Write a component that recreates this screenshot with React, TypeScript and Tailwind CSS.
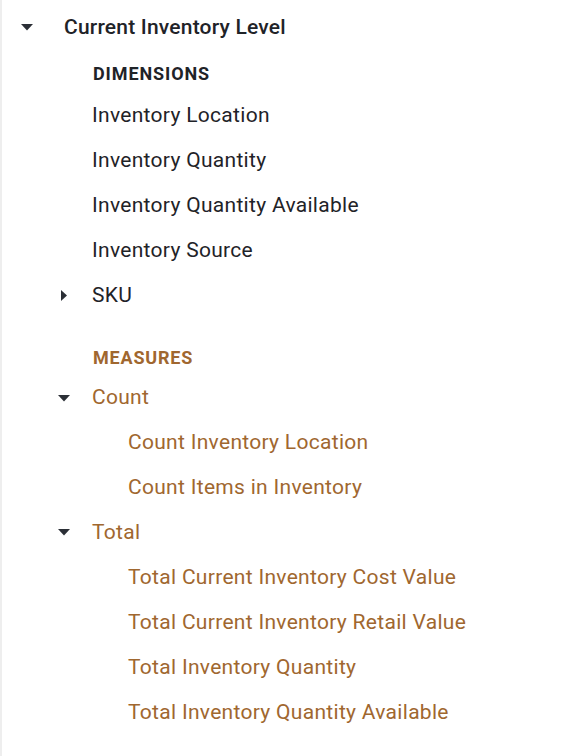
import React from "react";

const dark = "text-[#1f2328]";
const brown = "text-[#a0672f]";

function CaretDown() {
  return (
    <svg width="12" height="7" viewBox="0 0 12 7" className="shrink-0">
      <path d="M0 0 L12 0 L6 6.5 Z" fill="#2b2f36" />
    </svg>
  );
}

function CaretRight() {
  return (
    <svg width="6" height="11" viewBox="0 0 6 11" className="shrink-0">
      <path d="M0 0 L6 5.5 L0 11 Z" fill="#2b2f36" />
    </svg>
  );
}

function Row({
  indent,
  caret,
  children,
  className,
}: {
  indent: string;
  caret?: React.ReactNode;
  children: React.ReactNode;
  className?: string;
}) {
  return (
    <div className={`flex items-center h-[45px] ${indent}`}>
      {caret && <div className="w-[34px] flex items-center">{caret}</div>}
      <span className={className}>{children}</span>
    </div>
  );
}

export default function App() {
  const dims = [
    "Inventory Location",
    "Inventory Quantity",
    "Inventory Quantity Available",
    "Inventory Source",
  ];
  const counts = ["Count Inventory Location", "Count Items in Inventory"];
  const totals = [
    "Total Current Inventory Cost Value",
    "Total Current Inventory Retail Value",
    "Total Inventory Quantity",
    "Total Inventory Quantity Available",
  ];
  const item = "text-[21px] tracking-[0.3px]";

  return (
    <div
      className="w-[574px] h-[756px] bg-white border-l-2 border-[#eeeeee] pt-[5px]"
      style={{ fontFamily: "Roboto, 'Noto Sans', sans-serif" }}
    >
      {/* Header */}
      <div className="flex items-center h-[45px] pl-[19px]">
        <div className="w-[43px] flex items-center">
          <CaretDown />
        </div>
        <span className={`text-[21px] tracking-[0.2px] font-medium ${dark}`}>
          Current Inventory Level
        </span>
      </div>

      {/* Dimensions */}
      <div className="flex items-center h-[43px] pt-[4px] pl-[91px]">
        <span className={`text-[18px] font-bold tracking-[0.9px] ${dark}`}>
          DIMENSIONS
        </span>
      </div>
      {dims.map((d) => (
        <Row key={d} indent="pl-[90px]" className={`${item} ${dark}`}>
          {d}
        </Row>
      ))}
      <Row
        indent="pl-[59px]"
        caret={<CaretRight />}
        className={`${item} -ml-[3px] ${dark}`}
      >
        SKU
      </Row>

      {/* Measures */}
      <div className="h-[17px]" />
      <div className="flex items-center h-[45px] pl-[91px]">
        <span className={`text-[18px] font-bold tracking-[0.8px] ${brown}`}>
          MEASURES
        </span>
      </div>

      <div className="flex items-center h-[40px] pb-[4px] pl-[56px]">
        <div className="w-[34px] flex items-center">
          <CaretDown />
        </div>
        <span className={`${item} ${brown}`}>Count</span>
      </div>
      {counts.map((c) => (
        <Row key={c} indent="pl-[126px]" className={`${item} ${brown}`}>
          {c}
        </Row>
      ))}

      <div className="flex items-center h-[45px] pl-[56px]">
        <div className="w-[34px] flex items-center">
          <CaretDown />
        </div>
        <span className={`${item} ${brown}`}>Total</span>
      </div>
      {totals.map((t) => (
        <Row key={t} indent="pl-[126px]" className={`${item} ${brown}`}>
          {t}
        </Row>
      ))}
    </div>
  );
}
